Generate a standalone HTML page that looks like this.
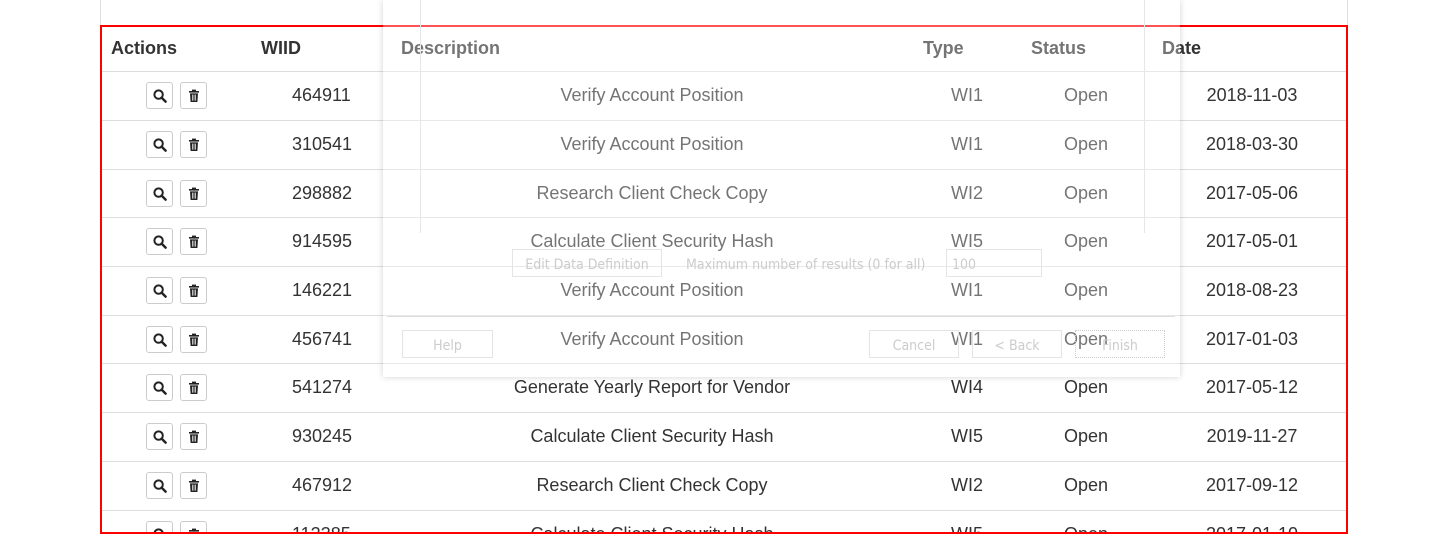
<!DOCTYPE html>
<html><head><meta charset="utf-8"><style>
*{margin:0;padding:0;box-sizing:border-box}
body{width:1447px;height:559px;background:#fff;position:relative;overflow:hidden;font-family:"Liberation Sans",Arial,sans-serif;color:#333}
.vl{position:absolute;top:0;height:25px;width:1px;background:#ddd}
.tbl{position:absolute;left:100px;top:25px;width:1248px;height:509px;border:2px solid #f00;overflow:hidden}
.h{position:absolute;top:11px;font-weight:bold;font-size:18px;color:#333}
.row{position:absolute;left:0;width:1248px;height:49px;border-top:1px solid #ddd;font-size:18px}
.row span{position:absolute;top:13px}
.c{text-align:center}
.btn{position:absolute;top:10px;width:27px;height:27px;border:1px solid #ccc;border-radius:3px;background:#fff}
.btn svg{position:absolute;left:6px;top:6px}
.ov{position:absolute;left:383px;top:0;width:797px;height:377px;background:rgba(255,255,255,0.32);box-shadow:0 0 6px rgba(0,0,0,0.18)}
.fb{position:absolute;border:1px solid #e4e4e4;font-size:14px;color:#ccc;text-align:center;line-height:30px;font-family:"DejaVu Sans","Liberation Sans",sans-serif;font-stretch:condensed}
</style></head><body>
<div class="vl" style="left:100px"></div><div class="vl" style="left:1347px"></div>
<div class="tbl">
<div class="h" style="left:9px">Actions</div>
<div class="h" style="left:159px">WIID</div>
<div class="h" style="left:299px">Description</div>
<div class="h" style="left:821px">Type</div>
<div class="h" style="left:929px">Status</div>
<div class="h" style="left:1060px">Date</div>
<div id="rows"></div>
</div>
<div class="ov">
<div style="position:absolute;left:37px;top:0;width:1px;height:233px;background:#e6e6e6"></div>
<div style="position:absolute;left:761px;top:0;width:1px;height:233px;background:#e6e6e6"></div>
<div style="position:absolute;left:4px;top:316px;width:788px;height:1px;background:#ddd"></div>
<div class="fb" style="left:129px;top:249px;width:150px;height:28px">Edit Data Definition</div>
<div style="position:absolute;left:303px;top:257px;font-size:14px;color:#ccc;font-family:'DejaVu Sans',sans-serif;font-stretch:condensed">Maximum number of results (0 for all)</div>
<div class="fb" style="left:563px;top:249px;width:96px;height:28px;text-align:left;padding-left:5px">100</div>
<div class="fb" style="left:19px;top:330px;width:91px;height:28px">Help</div>
<div class="fb" style="left:486px;top:330px;width:90px;height:28px">Cancel</div>
<div class="fb" style="left:589px;top:330px;width:90px;height:28px">&lt; Back</div>
<div class="fb" style="left:692px;top:330px;width:90px;height:28px;border:1px dotted #ccc">Finish</div>
</div>
<script>
var d=[["464911","Verify Account Position","WI1","2018-11-03"],["310541","Verify Account Position","WI1","2018-03-30"],["298882","Research Client Check Copy","WI2","2017-05-06"],["914595","Calculate Client Security Hash","WI5","2017-05-01"],["146221","Verify Account Position","WI1","2018-08-23"],["456741","Verify Account Position","WI1","2017-01-03"],["541274","Generate Yearly Report for Vendor","WI4","2017-05-12"],["930245","Calculate Client Security Hash","WI5","2019-11-27"],["467912","Research Client Check Copy","WI2","2017-09-12"],["112385","Calculate Client Security Hash","WI5","2017-01-10"]];
var tops=[44,93,142,190,239,288,336,385,434,483],h="";
var mag='<svg width="14" height="14" viewBox="0 0 14 14"><circle cx="5.6" cy="5.6" r="4.2" fill="none" stroke="#222" stroke-width="2"/><path d="M8.6 8.6L12.6 12.6" stroke="#222" stroke-width="2.4" stroke-linecap="round"/></svg>';
var tr='<svg width="14" height="14" viewBox="0 0 14 14"><rect x="2" y="2" width="10" height="1.6" fill="#222"/><rect x="5" y="0.6" width="4" height="1.6" fill="#222"/><path d="M3 4.4h8l-.6 8.6H3.6z" fill="#222"/><path d="M5.4 5.6v6M7 5.6v6M8.6 5.6v6" stroke="#fff" stroke-width=".7"/></svg>';
d.forEach(function(r,i){h+='<div class="row" style="top:'+tops[i]+'px"><div class="btn" style="left:44px">'+mag+'</div><div class="btn" style="left:78px">'+tr+'</div><span style="left:190px">'+r[0]+'</span><span class="c" style="left:350px;width:400px">'+r[1]+'</span><span class="c" style="left:830px;width:70px">'+r[2]+'</span><span class="c" style="left:944px;width:80px">Open</span><span class="c" style="left:1090px;width:120px">'+r[3]+'</span></div>';});
document.getElementById('rows').innerHTML=h;
</script>
</body></html>
